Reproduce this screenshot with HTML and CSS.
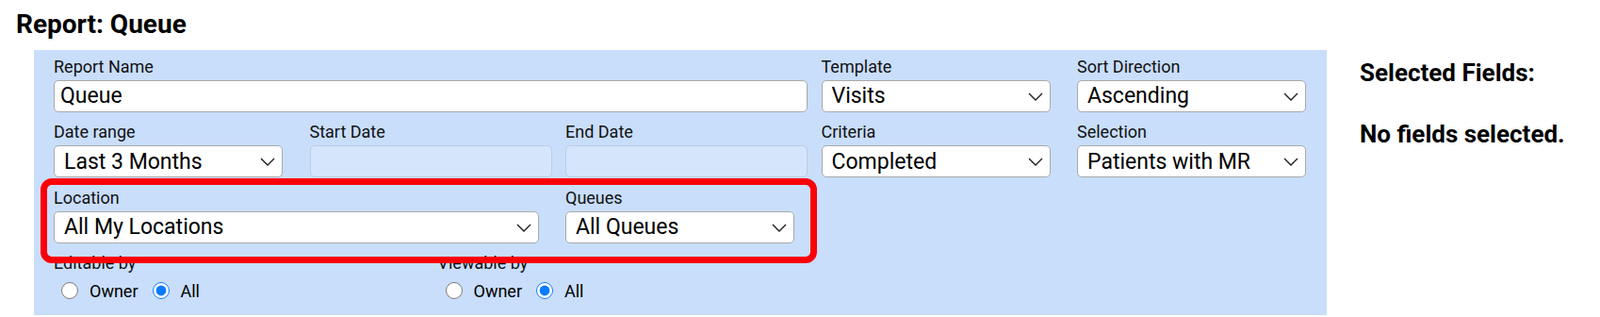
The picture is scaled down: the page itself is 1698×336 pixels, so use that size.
FILE: index.html
```html
<!DOCTYPE html>
<html>
  <head>
    <meta charset="UTF-8" />
    <title>Report: Queue</title>
    <link rel="stylesheet" href="styles.css">
  </head>
  <body>
    <h1 class="page-title">Report: Queue</h1>
    <div class="layout">
      <form class="report-form" id="reportForm">
        <div class="field span-3">
          <label for="reportName">Report Name</label>
          <input type="text" id="reportName" value="Queue" />
        </div>
        <div class="field">
          <label for="template">Template</label>
          <div class="select-wrap">
            <select id="template"><option>Visits</option></select>
            <svg class="chevron" width="16" height="9" viewBox="0 0 16 9"><polyline points="1,1 8,8 15,1" /></svg>
          </div>
        </div>
        <div class="field">
          <label for="sortDirection">Sort Direction</label>
          <div class="select-wrap">
            <select id="sortDirection"><option>Ascending</option></select>
            <svg class="chevron" width="16" height="9" viewBox="0 0 16 9"><polyline points="1,1 8,8 15,1" /></svg>
          </div>
        </div>

        <div class="field">
          <label for="dateRange">Date range</label>
          <div class="select-wrap">
            <select id="dateRange"><option>Last 3 Months</option></select>
            <svg class="chevron" width="16" height="9" viewBox="0 0 16 9"><polyline points="1,1 8,8 15,1" /></svg>
          </div>
        </div>
        <div class="field">
          <label for="startDate">Start Date</label>
          <input type="text" id="startDate" disabled />
        </div>
        <div class="field">
          <label for="endDate">End Date</label>
          <input type="text" id="endDate" disabled />
        </div>
        <div class="field">
          <label for="criteria">Criteria</label>
          <div class="select-wrap">
            <select id="criteria"><option>Completed</option></select>
            <svg class="chevron" width="16" height="9" viewBox="0 0 16 9"><polyline points="1,1 8,8 15,1" /></svg>
          </div>
        </div>
        <div class="field">
          <label for="selection">Selection</label>
          <div class="select-wrap">
            <select id="selection"><option>Patients with MR</option></select>
            <svg class="chevron" width="16" height="9" viewBox="0 0 16 9"><polyline points="1,1 8,8 15,1" /></svg>
          </div>
        </div>

        <div class="field span-2">
          <label for="location">Location</label>
          <div class="select-wrap">
            <select id="location"><option>All My Locations</option></select>
            <svg class="chevron" width="16" height="9" viewBox="0 0 16 9"><polyline points="1,1 8,8 15,1" /></svg>
          </div>
        </div>
        <div class="field">
          <label for="queues">Queues</label>
          <div class="select-wrap">
            <select id="queues"><option>All Queues</option></select>
            <svg class="chevron" width="16" height="9" viewBox="0 0 16 9"><polyline points="1,1 8,8 15,1" /></svg>
          </div>
        </div>

        <div class="access-row span-3">
          <div class="access-group">
            <span class="access-label">Editable by</span>
            <div class="radio-options">
              <input type="radio" name="editable" id="editOwner" />
              <label for="editOwner">Owner</label>
              <input type="radio" name="editable" id="editAll" checked />
              <label for="editAll">All</label>
            </div>
          </div>
          <div class="access-group">
            <span class="access-label">Viewable by</span>
            <div class="radio-options">
              <input type="radio" name="viewable" id="viewOwner" />
              <label for="viewOwner">Owner</label>
              <input type="radio" name="viewable" id="viewAll" checked />
              <label for="viewAll">All</label>
            </div>
          </div>
        </div>

        <!-- highlight drawn over the location/queues row -->
        <div class="highlight"></div>
      </form>

      <aside class="selected-fields">
        <h2>Selected Fields:</h2>
        <p>No fields selected.</p>
      </aside>
    </div>
  </body>
</html>
```

FILE: styles.css
```css
body {
  margin: 0;
  font-family: Roboto, "Liberation Sans", Arial, sans-serif;
  color: #000;
  background: #fff;
}

.page-title {
  font-size: 28px;
  line-height: 30px;
  font-weight: 700;
  margin: 11px 0 12px 17px;
}

.layout {
  display: flex;
  align-items: flex-start;
  padding-left: 36px;
}

.report-form {
  position: relative;
  width: 1372px;
  box-sizing: border-box;
  padding: 7.5px 0 14px 21px;
  background-color: #c9defb;
  display: grid;
  grid-template-columns: repeat(5, 257px);
  column-gap: 14.5px;
  row-gap: 11.5px;
}

.span-2 {
  grid-column: span 2;
}
.span-3 {
  grid-column: span 3;
}

.field label,
.access-label {
  display: block;
  font-size: 18px;
  line-height: 20px;
  margin-bottom: 4px;
  color: #111;
}

.field input[type="text"],
.field select {
  display: block;
  width: 100%;
  height: 34px;
  box-sizing: border-box;
  border: 1px solid #a9a9a9;
  border-radius: 5px;
  background-color: #fff;
  font-family: inherit;
  font-size: 23px;
  color: #000;
}

.field input[type="text"] {
  padding: 0 6px;
}

.field input[type="text"]:disabled {
  background-color: #d5e5fc;
  border-color: #bccde2;
}

.select-wrap {
  position: relative;
  width: calc(100% - 14px);
}

.field select {
  appearance: none;
  -webkit-appearance: none;
  padding: 0 30px 0 10px;
}

.chevron {
  position: absolute;
  right: 8px;
  top: 13px;
  pointer-events: none;
}
.chevron polyline {
  fill: none;
  stroke: #1d1d1d;
  stroke-width: 1.4;
}

.access-row {
  display: grid;
  grid-template-columns: 1fr 1fr;
  column-gap: 15px;
}

.access-label {
  margin-bottom: 0;
}

.radio-options {
  display: flex;
  align-items: center;
  height: 24px;
  margin-top: 7px;
  font-size: 18px;
}

.radio-options input[type="radio"] {
  width: 18px;
  height: 18px;
  margin: 0 12px 0 8px;
  accent-color: #0a7aff;
}

.radio-options label {
  margin-right: 7px;
}

.highlight {
  position: absolute;
  left: 7px;
  top: 136px;
  width: 824px;
  height: 90px;
  box-sizing: border-box;
  border: 7px solid #fb0007;
  border-radius: 12px;
  pointer-events: none;
}

.selected-fields {
  margin-left: 35px;
}
.selected-fields h2,
.selected-fields p {
  font-size: 26px;
  line-height: 28px;
  font-weight: 700;
}
.selected-fields h2 {
  margin: 10px 0 0;
}
.selected-fields p {
  margin: 37px 0 0;
}
```
